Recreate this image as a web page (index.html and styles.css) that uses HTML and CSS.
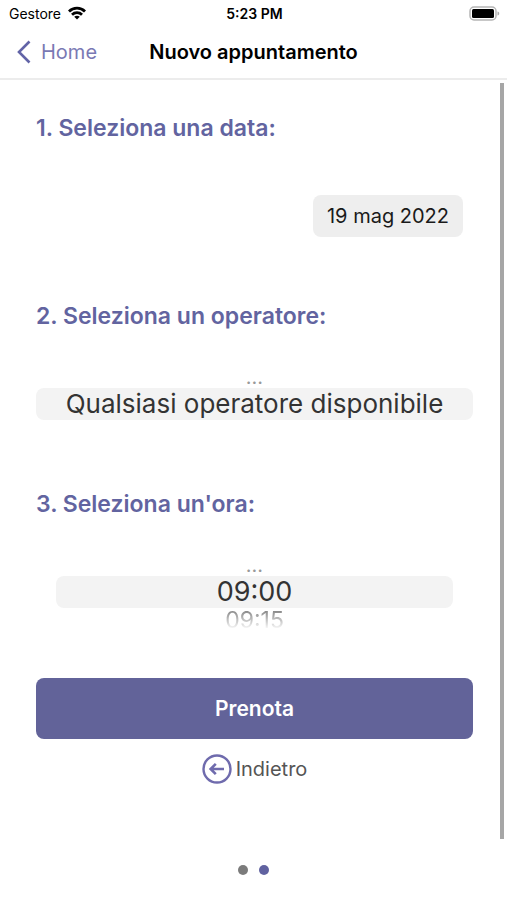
FILE: index.html
```html
<!DOCTYPE html>
<html lang="it">
<head>
<meta charset="utf-8">
<meta name="viewport" content="width=device-width, initial-scale=1">
<title>Nuovo appuntamento</title>
<link rel="stylesheet" href="styles.css">
</head>
<body>
<div class="app">
  <div class="status">
    <div class="carrier">
      <span>Gestore</span>
      <svg width="18" height="14" viewBox="0 0 18 14" aria-hidden="true">
        <g fill="none" stroke="#000" stroke-width="2.8">
          <path d="M1 5.400C5.400 1 12.600 1 17 5.400"/>
          <path d="M4 8.700C6.800 6 11.200 6 14 8.700"/>
        </g>
        <path d="M9 13.600 6.200 10.800C7.800 9.400 10.200 9.400 11.800 10.800Z"/>
      </svg>
    </div>
    <div class="clock">5:23 PM</div>
    <svg class="battery" width="31" height="15" viewBox="0 0 31 15" aria-hidden="true">
      <rect x="1" y="1" width="26" height="13" rx="4" fill="#fff" stroke="#b5b5b5" stroke-width="1.500"/>
      <rect x="3" y="3" width="22" height="9" rx="1.500"/>
      <path d="M28.500 5.500C30.800 6 30.800 9 28.500 9.500Z" fill="#aaa"/>
    </svg>
  </div>
  <header class="nav">
    <a class="back" href="#home">
      <svg width="16" height="26" viewBox="0 0 16 26" aria-hidden="true"><path d="M13.500 2.500 3 13 13.500 23.500" fill="none" stroke="#6264a7" stroke-width="2.600"/></svg>
      <span>Home</span>
    </a>
    <h1>Nuovo appuntamento</h1>
  </header>
  <div class="scroller">
    <main class="form">
      <section class="step">
        <h2>1. Seleziona una data:</h2>
        <button class="date" type="button">19 mag 2022</button>
      </section>
      <section class="step">
        <h2><label for="operator">2. Seleziona un operatore:</label></h2>
        <div class="wheel">
          <div class="more">...</div>
          <select id="operator" class="current"><option>Qualsiasi operatore disponibile</option></select>
        </div>
      </section>
      <section class="step">
        <h2><label for="time">3. Seleziona un'ora:</label></h2>
        <div class="wheel inset">
          <div class="more">...</div>
          <select id="time" class="current time"><option>09:00</option><option>09:15</option></select>
          <div class="next">09:15</div>
        </div>
      </section>
      <button class="book" type="button">Prenota</button>
      <a class="previous" href="#indietro">
        <svg width="30" height="30" viewBox="0 0 30 30" fill="none" stroke="#6f6bad" aria-hidden="true">
          <circle cx="15" cy="15" r="13.500" stroke-width="2.400"/>
          <path d="M22 15H9M13.800 9.800 8.600 15 13.800 20.200" stroke-width="2.600"/>
        </svg>
        <span>Indietro</span>
      </a>
    </main>
    <div class="scrollbar"></div>
  </div>
  <footer class="pages"><span class="dot"></span><span class="dot active"></span></footer>
</div>
</body>
</html>
```
FILE: styles.css
```css
* { box-sizing: border-box; }
body {
  margin: 0;
  background: #fff;
  color: #000;
  font-family: Inter, "Liberation Sans", sans-serif;
}
svg { display: block; flex: none; }
button, select { font: inherit; border: 0; appearance: none; }
a { text-decoration: none; }
.app { min-height: 100vh; display: flex; flex-direction: column; }
.status {
  display: grid;
  grid-template-columns: 1fr auto 1fr;
  align-items: center;
  height: 26px;
  padding: 0 7px 0 9px;
  font-size: 14px;
}
.carrier { display: flex; align-items: center; gap: 7px; }
.clock { font-weight: 600; }
.battery { justify-self: end; }
.nav {
  display: grid;
  grid-template-columns: 1fr auto 1fr;
  align-items: center;
  height: 54px;
  padding: 0 16px;
  border-bottom: 2px solid #ececec;
}
.back {
  display: flex;
  align-items: center;
  gap: 9px;
  color: #7a79b4;
  font-size: 20px;
}
h1 { margin: 0; font-size: 20px; font-weight: 600; }
.scroller { display: flex; flex: 1; }
.form {
  flex: 1;
  display: flex;
  flex-direction: column;
  padding: 32px 27px 0 36px;
}
.scrollbar { width: 4px; margin: 3px 3px 0 0; background: #a6a6a6; }
.step { display: flex; flex-direction: column; height: 188px; }
h2 {
  margin: 0;
  color: #6264a0;
  font-size: 23px;
  line-height: 32px;
  font-weight: 600;
}
.date {
  align-self: flex-end;
  height: 42px;
  margin: 51px 10px 0 0;
  padding: 0 14px;
  border-radius: 8px;
  background: #eee;
  color: #1a1a1a;
  font-size: 20px;
}
.wheel { padding-top: 40px; text-align: center; }
.inset { padding-left: 20px; padding-right: 20px; }
.more { height: 16px; color: #999; font-size: 20px; line-height: 10px; }
.current {
  display: block;
  width: 100%;
  height: 32px;
  padding: 0;
  border-radius: 8px;
  background: #f3f3f3;
  color: #333;
  font-size: 26px;
  line-height: 32px;
  text-align: center;
  text-align-last: center;
}
.time { font-size: 27px; }
.next {
  height: 24px;
  color: #777;
  font-size: 23px;
  line-height: 24px;
  mask-image: linear-gradient(#000, transparent 90%);
}
.book {
  height: 61px;
  margin-top: 2px;
  border-radius: 8px;
  background: #626399;
  color: #fff;
  font-size: 21px;
  font-weight: 600;
}
.previous {
  align-self: center;
  display: flex;
  align-items: center;
  gap: 4px;
  margin-top: 15px;
  color: #555;
  font-size: 20px;
}
.pages {
  display: flex;
  justify-content: center;
  gap: 11px;
  padding: 26px 0 25px;
}
.dot { width: 10px; height: 10px; border-radius: 50%; background: #7b7b7b; }
.active { background: #6062a0; }
```
